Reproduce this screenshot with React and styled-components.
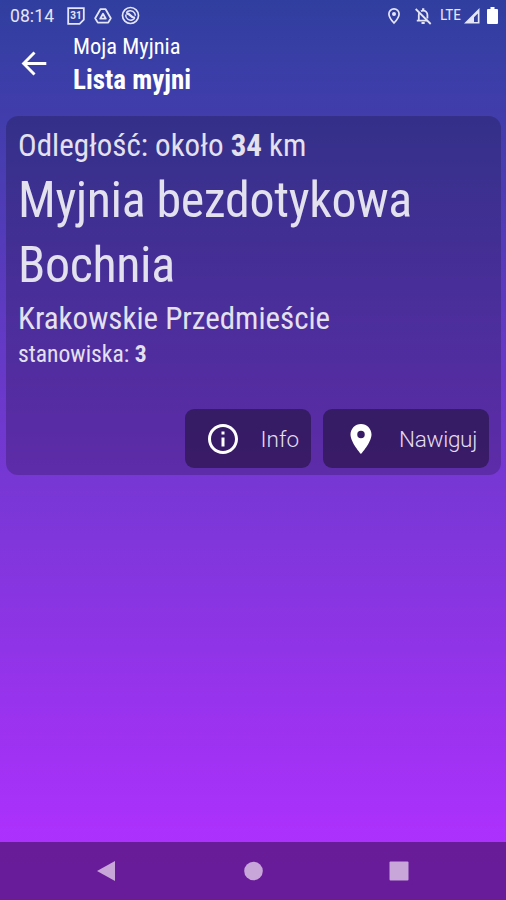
import React from 'react'
import styled, { createGlobalStyle } from 'styled-components'

const GlobalStyle = createGlobalStyle`
* { box-sizing: border-box; }
body {
  margin: 0;
  background: #303f9f;
}
`

const Screen = styled.div`
display: flex;
flex-direction: column;
width: 506px;
height: 900px;
overflow: hidden;
background: linear-gradient(180deg, #303f9f 0%, #7837d5 54%, #b030ff 96%);
color: #fff;
font-family: Roboto, "Liberation Sans", sans-serif;
`

const StatusBar = styled.div`
display: flex;
align-items: center;
justify-content: space-between;
height: 31px;
padding: 0 8px 0 10px;
color: #e4e5f6;
`

const StatusGroup = styled.div`
display: flex;
align-items: center;
gap: ${(props) => props.$gap || 0}px;
`

const Clock = styled.span`
width: 48px;
padding-top: 2px;
font-size: 17.5px;
line-height: 29px;
letter-spacing: 0.1px;
`

const Network = styled.span`
width: 19px;
margin-left: 3px;
font-size: 15.5px;
font-stretch: 78%;
line-height: 31px;
white-space: nowrap;
`

const Header = styled.header`
display: flex;
align-items: center;
height: 65px;
padding-left: 19px;
`

const Titles = styled.div`
margin-left: 24px;
padding-top: 3px;
`

// condensed text line
const Line = styled.div`
height: ${(props) => props.$height}px;
line-height: ${(props) => props.$height}px;
font-size: ${(props) => props.$size}px;
font-weight: ${(props) => props.$weight || 400};
font-stretch: 75%;
letter-spacing: ${(props) => props.$spacing || 0}px;
white-space: nowrap;
`

const Card = styled.main`
display: flex;
flex-direction: column;
height: 359px;
margin: 20px 5px 0 6px;
padding: 9px 12px 7px;
border-radius: 12px;
background: rgba(0, 0, 0, 0.2);
color: #e4e1ee;
`

const Actions = styled.div`
display: flex;
justify-content: flex-end;
gap: 12px;
margin-top: auto;
`

const Button = styled.button`
display: flex;
align-items: center;
justify-content: space-between;
width: ${(props) => props.$width}px;
height: 59px;
padding: 0 12px 0 20px;
border: 0;
border-radius: 9px;
background: rgba(0, 0, 0, 0.38);
color: #e4def0;
font-family: inherit;
font-size: 22.5px;
font-weight: 300;
letter-spacing: ${(props) => props.$spacing || 0}px;
`

const NavBar = styled.nav`
display: flex;
align-items: center;
justify-content: space-between;
height: 58px;
margin-top: auto;
padding: 0 96px;
background: rgba(0, 0, 0, 0.4);
`

const CalendarIcon = () => (
  <svg width="18" height="18" viewBox="0 0 18 18">
    <path d="M1.2 1.2h15.6v11.4l-4.2 4.2H1.2z" fill="none" stroke="currentColor" strokeWidth="1.8" />
    <text x="9" y="12.4" textAnchor="middle" fontSize="10" fontWeight="700" fill="currentColor">31</text>
  </svg>
)

const DriveIcon = () => (
  <svg width="18" height="18" viewBox="0 0 18 18" fill="none" stroke="currentColor" strokeWidth="1.8" strokeLinejoin="round">
    <path d="M6.4 2.2h5.2l5.2 9-2.6 4.4H3.8l-2.6-4.4z" />
    <path d="M9 6.8l2.8 4.9H6.2z" />
  </svg>
)

const SyncIcon = () => (
  <svg width="19" height="19" viewBox="0 0 19 19" fill="none" stroke="currentColor">
    <circle cx="9.5" cy="9.5" r="8" strokeWidth="1.7" />
    <path d="M5.2 6.6c2-2.8 6.6-2.6 8.4.6.5.9.7 1.7.7 2.6M4.7 8.6c-.4 3.6 3.2 6.3 6.4 5.4 1-.3 1.9-.8 2.5-1.6" strokeWidth="1.5" />
    <path d="M5.2 7.2c2 .2 3 .8 4.3 2.3s2.5 2.3 4.6 2.4" strokeWidth="2.4" />
  </svg>
)

const PinOutlineIcon = () => (
  <svg width="14" height="18" viewBox="0 0 14 18">
    <path d="M7 1.8a5.1 5.1 0 0 0-5.1 5.1C1.9 10.5 7 16 7 16s5.1-5.5 5.1-9.1A5.1 5.1 0 0 0 7 1.8z" fill="none" stroke="currentColor" strokeWidth="1.7" />
    <circle cx="7" cy="6.9" r="2" fill="currentColor" />
  </svg>
)

const BellOffIcon = () => (
  <svg width="18" height="18" viewBox="0 0 18 18" fill="none" stroke="currentColor" strokeWidth="1.8">
    <path d="M1.7 2l15 15" />
    <path d="M4.8 13.5V8c0-.9.2-1.6.6-2.2M7 4.2c.6-.4 1.3-.6 2-.6 2.5 0 4.4 1.8 4.4 4.4v3.5M2.8 13.7h10.8" />
    <path d="M9.2 1.2v2.2M7.5 16h3.2" strokeWidth="2.2" />
  </svg>
)

const SignalIcon = () => (
  <svg width="16" height="16" viewBox="0 0 16 16" fill="currentColor">
    <path fillRule="evenodd" d="M15.5 0v15.5H0zM13.8 5.500l-3.800 3.800v4.600h3.800z" />
  </svg>
)

const BatteryIcon = () => (
  <svg width="11" height="17" viewBox="0 0 11 17" fill="#fff">
    <path d="M3.5 0h4v2H10a1 1 0 0 1 1 1v13a1 1 0 0 1-1 1H1a1 1 0 0 1-1-1V3a1 1 0 0 1 1-1h2.5z" />
  </svg>
)

const BackIcon = () => (
  <svg width="30" height="30" viewBox="0 0 30 30" fill="none" stroke="#fff" strokeWidth="2.9">
    <path d="M27.3 14.5H5M15.5 3.5L4.6 14.5l10.9 11" />
  </svg>
)

const InfoIcon = () => (
  <svg width="36" height="36" viewBox="0 0 24 24" fill="#fff">
    <path d="M11 7h2v2h-2zm0 4h2v6h-2zm1-9C6.48 2 2 6.48 2 12s4.48 10 10 10 10-4.48 10-10S17.52 2 12 2zm0 18c-4.41 0-8-3.59-8-8s3.59-8 8-8 8 3.59 8 8-3.59 8-8 8z" />
  </svg>
)

const PinIcon = () => (
  <svg width="36" height="36" viewBox="0 0 24 24" fill="#fff">
    <path d="M12 2C8.13 2 5 5.13 5 9c0 5.25 7 13 7 13s7-7.75 7-13c0-3.87-3.13-7-7-7zm0 9.5a2.5 2.5 0 0 1 0-5 2.5 2.5 0 0 1 0 5z" />
  </svg>
)

const NavIcon = ({ children }) => (
  <svg width="22" height="22" viewBox="0 0 22 22" fill="#c8a6d9">
    {children}
  </svg>
)

const App = () => {
  return (
    <>
      <GlobalStyle />
      <Screen>
        <StatusBar>
          <StatusGroup $gap={9}>
            <Clock>08:14</Clock>
            <CalendarIcon />
            <DriveIcon />
            <SyncIcon />
          </StatusGroup>
          <StatusGroup $gap={13}>
            <PinOutlineIcon />
            <StatusGroup $gap={5}>
              <BellOffIcon />
              <Network>LTE</Network>
              <StatusGroup $gap={7}>
                <SignalIcon />
                <BatteryIcon />
              </StatusGroup>
            </StatusGroup>
          </StatusGroup>
        </StatusBar>
        <Header>
          <BackIcon />
          <Titles>
            <Line $size={22.5} $height={29}>Moja Myjnia</Line>
            <Line $size={27} $height={38} $weight={700}>Lista myjni</Line>
          </Titles>
        </Header>
        <Card>
          <Line $size={31} $height={42}>Odległość: około <b>34</b> km</Line>
          <Line $size={50} $height={66} $spacing={-0.35}>Myjnia bezdotykowa</Line>
          <Line $size={50} $height={65} $spacing={-0.35}>Bochnia</Line>
          <Line $size={31} $height={41}>Krakowskie Przedmieście</Line>
          <Line $size={23.6} $height={31}>stanowiska: <b>3</b></Line>
          <Actions>
            <Button $width={126}><InfoIcon />Info</Button>
            <Button $width={166} $spacing={-0.3}><PinIcon />Nawiguj</Button>
          </Actions>
        </Card>
        <NavBar>
          <NavIcon><path d="M1 11L19 1v20z" /></NavIcon>
          <NavIcon><circle cx="11.5" cy="11" r="9.3" /></NavIcon>
          <NavIcon><rect x="1.5" y="1.5" width="19" height="19" rx="1" /></NavIcon>
        </NavBar>
      </Screen>
    </>
  )
}

export default App
